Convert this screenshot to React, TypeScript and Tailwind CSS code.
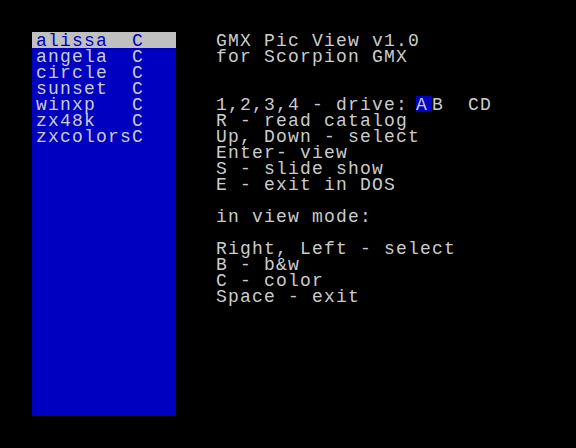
const files = [
  { name: "alissa", kind: "C" },
  { name: "angela", kind: "C" },
  { name: "circle", kind: "C" },
  { name: "sunset", kind: "C" },
  { name: "winxp", kind: "C" },
  { name: "zx48k", kind: "C" },
  { name: "zxcolors", kind: "C" },
];

const help = [
  "GMX Pic View v1.0",
  "for Scorpion GMX",
  "",
  "",
  "@drive",
  "R - read catalog",
  "Up, Down - select",
  "Enter- view",
  "S - slide show",
  "E - exit in DOS",
  "",
  "in view mode:",
  "",
  "Right, Left - select",
  "B - b&w",
  "C - color",
  "Space - exit",
];

const font = "font-['Liberation_Mono',monospace] text-[18px] tracking-[1.2px] leading-[16px] whitespace-pre";

export default function App() {
  return (
    <div className={`w-[576px] h-[448px] bg-black flex pt-[32px] pl-[32px] text-[#cccccc] ${font}`}>
      {/* file list */}
      <div className="w-[144px] h-[384px] bg-[#0000c0] flex flex-col">
        {files.map((f, i) => (
          <div
            key={f.name}
            className={`h-[16px] flex pl-[4px] pt-[1px] ${i === 0 ? "bg-[#c0c0c0] text-[#0000c0]" : ""}`}
          >
            <span className="w-[96px]">{f.name}</span>
            <span>{f.kind}</span>
          </div>
        ))}
      </div>

      {/* help text */}
      <div className="ml-[40px] flex flex-col">
        {help.map((line, i) =>
          line === "@drive" ? (
            <div key={i} className="h-[16px] flex pt-[1px]">
              <span className="w-[200px]">1,2,3,4 - drive:</span>
              <span className="w-[16px] bg-[#0000c0] -mt-[1px] pt-[1px]">A</span>
              <span className="w-[36px]">B</span>
              <span>CD</span>
            </div>
          ) : (
            <div key={i} className="h-[16px] pt-[1px]">
              {line}
            </div>
          )
        )}
      </div>
    </div>
  );
}
